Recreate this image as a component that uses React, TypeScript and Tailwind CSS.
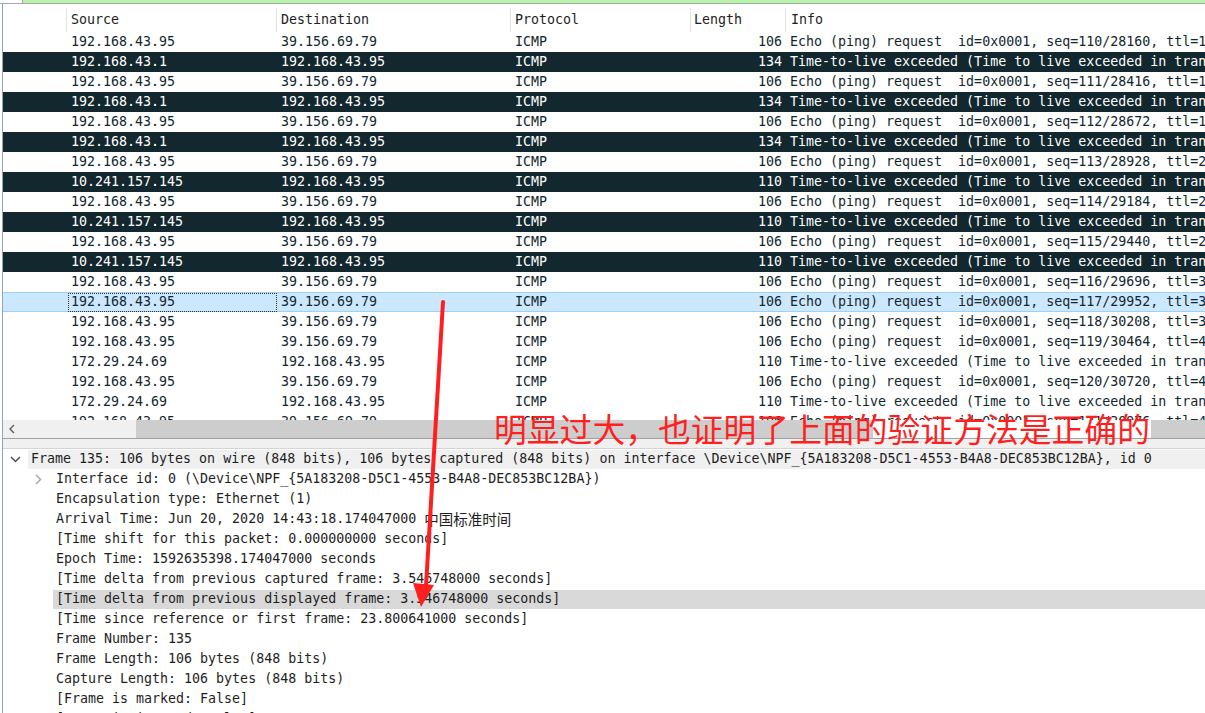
import React from "react";

type Row = { src: string; dst: string; len: string; info: string; dark?: boolean; sel?: boolean };

const ECHO = (seq: number, b: number, ttl: number) =>
  `Echo (ping) request  id=0x0001, seq=${seq}/${b}, ttl=${ttl} (no response found!)`;
const TTL = "Time-to-live exceeded (Time to live exceeded in transit)";
const ME = "192.168.43.95";
const DST = "39.156.69.79";

const rows: Row[] = [
  { src: ME, dst: DST, len: "106", info: ECHO(110, 28160, 1) },
  { src: "192.168.43.1", dst: ME, len: "134", info: TTL, dark: true },
  { src: ME, dst: DST, len: "106", info: ECHO(111, 28416, 1) },
  { src: "192.168.43.1", dst: ME, len: "134", info: TTL, dark: true },
  { src: ME, dst: DST, len: "106", info: ECHO(112, 28672, 1) },
  { src: "192.168.43.1", dst: ME, len: "134", info: TTL, dark: true },
  { src: ME, dst: DST, len: "106", info: ECHO(113, 28928, 2) },
  { src: "10.241.157.145", dst: ME, len: "110", info: TTL, dark: true },
  { src: ME, dst: DST, len: "106", info: ECHO(114, 29184, 2) },
  { src: "10.241.157.145", dst: ME, len: "110", info: TTL, dark: true },
  { src: ME, dst: DST, len: "106", info: ECHO(115, 29440, 2) },
  { src: "10.241.157.145", dst: ME, len: "110", info: TTL, dark: true },
  { src: ME, dst: DST, len: "106", info: ECHO(116, 29696, 3) },
  { src: ME, dst: DST, len: "106", info: ECHO(117, 29952, 3), sel: true },
  { src: ME, dst: DST, len: "106", info: ECHO(118, 30208, 3) },
  { src: ME, dst: DST, len: "106", info: ECHO(119, 30464, 4) },
  { src: "172.29.24.69", dst: ME, len: "110", info: TTL },
  { src: ME, dst: DST, len: "106", info: ECHO(120, 30720, 4) },
  { src: "172.29.24.69", dst: ME, len: "110", info: TTL },
  { src: ME, dst: DST, len: "106", info: ECHO(121, 30976, 4) },
];

const details: string[] = [
  "Encapsulation type: Ethernet (1)",
  "Arrival Time: Jun 20, 2020 14:43:18.174047000 中国标准时间",
  "[Time shift for this packet: 0.000000000 seconds]",
  "Epoch Time: 1592635398.174047000 seconds",
  "[Time delta from previous captured frame: 3.546748000 seconds]",
  "[Time delta from previous displayed frame: 3.546748000 seconds]",
  "[Time since reference or first frame: 23.800641000 seconds]",
  "Frame Number: 135",
  "Frame Length: 106 bytes (848 bits)",
  "Capture Length: 106 bytes (848 bits)",
  "[Frame is marked: False]",
  "[Frame is ignored: False]",
];

function PacketRow({ r }: { r: Row }) {
  const base = r.dark
    ? "bg-[#12272e] text-white"
    : r.sel
    ? "bg-[#cce8ff] text-[#12272e] border-y border-[#99d1ff]"
    : "bg-white text-[#12272e]";
  return (
    <div className={`flex h-[20px] shrink-0 items-center box-border whitespace-pre ${base}`}>
      <div className="w-[64px] shrink-0" />
      <div className="w-[210px] shrink-0 h-full flex items-center pl-[4px] box-border">
        {r.sel ? (
          <div className="-ml-[3px] pl-[2px] h-[19px] w-[209px] flex items-center border border-dotted border-[#333]">
            {r.src}
          </div>
        ) : (
          r.src
        )}
      </div>
      <div className="w-[234px] shrink-0 pl-[4px]">{r.dst}</div>
      <div className="w-[180px] shrink-0 pl-[4px]">ICMP</div>
      <div className="w-[95px] shrink-0 text-right pr-[4px]">{r.len}</div>
      <div className="flex-1 pl-[4px] overflow-hidden">{r.info}</div>
    </div>
  );
}

export default function App() {
  const mono = "font-['DejaVu_Sans_Mono','Noto_Sans_CJK_SC',monospace] text-[13.3px]";
  return (
    <div className={`relative w-[1205px] h-[713px] overflow-hidden bg-white ${mono}`}>
      {/* filter bar remnant */}
      <div className="flex h-[4px] border-b border-[#a8a8a8]">
        <div className="w-[23px] border-r border-[#a8a8a8] bg-white" />
        <div className="flex-1 bg-[#b7f5a8]" />
      </div>

      <div className="ml-[2px] border-l border-[#8fa5b0] flex flex-col h-[709px]">
        {/* header */}
        <div className="pt-[4px] bg-white">
          <div className="flex h-[24px] items-center text-[#1e1e1e] whitespace-pre">
            <div className="w-[64px] h-full border-r border-[#e3e3e3] shrink-0" />
            <div className="w-[210px] h-full border-r border-[#e3e3e3] shrink-0 pl-[4px] flex items-center">Source</div>
            <div className="w-[234px] h-full border-r border-[#e3e3e3] shrink-0 pl-[4px] flex items-center">Destination</div>
            <div className="w-[180px] h-full border-r border-[#e3e3e3] shrink-0 pl-[4px] flex items-center">Protocol</div>
            <div className="w-[95px] h-full border-r border-[#e3e3e3] shrink-0 pl-[3px] flex items-center">Length</div>
            <div className="flex-1 pl-[5px] flex items-center">Info</div>
          </div>
        </div>

        {/* packet list */}
        <div className="h-[388px] shrink-0 overflow-hidden flex flex-col">
          {rows.map((r, i) => (
            <PacketRow key={i} r={r} />
          ))}
        </div>

        {/* horizontal scrollbar */}
        <div className="flex h-[18px] shrink-0 bg-[#f0f0f0]">
          <div className="w-[17px] flex items-center justify-center">
            <svg width="8" height="10" viewBox="0 0 8 10">
              <path d="M6 1 L2 5 L6 9" fill="none" stroke="#606060" strokeWidth="1.4" />
            </svg>
          </div>
          <div className="w-[116px]" />
          <div className="flex-1 bg-[#cdcdcd]" />
        </div>

        {/* splitter */}
        <div className="h-[11px] shrink-0 border-t border-[#a0a0a0] border-b border-b-[#d4d4d4] bg-[#f0f0f0] box-border" />

        {/* detail pane */}
        <div className="flex-1 overflow-hidden text-[#1e1e1e] whitespace-pre">
          <div className="flex h-[20px] items-center">
            <div className="w-[25px] flex items-center justify-center">
              <svg width="11" height="7" viewBox="0 0 11 7">
                <path d="M1 1 L5.5 5.5 L10 1" fill="none" stroke="#505050" strokeWidth="1.5" />
              </svg>
            </div>
            <div className="flex-1 h-[19px] bg-[#f0f0f0] pl-[3px] flex items-center">
              Frame 135: 106 bytes on wire (848 bits), 106 bytes captured (848 bits) on interface \Device\NPF_{"{"}5A183208-D5C1-4553-B4A8-DEC853BC12BA{"}"}, id 0
            </div>
          </div>
          <div className="flex h-[20px] items-center">
            <div className="w-[32px]" />
            <div className="w-[21px] flex items-center">
              <svg width="7" height="11" viewBox="0 0 7 11">
                <path d="M1 1 L5.5 5.5 L1 10" fill="none" stroke="#a8a8a8" strokeWidth="1.5" />
              </svg>
            </div>
            <div>Interface id: 0 (\Device\NPF_{"{"}5A183208-D5C1-4553-B4A8-DEC853BC12BA{"}"})</div>
          </div>
          {details.map((d, i) => (
            <div key={i} className="flex h-[20px] items-center">
              <div className="w-[50px] shrink-0" />
              <div
                className={`flex-1 h-[19px] pl-[3px] flex items-center ${
                  d.startsWith("[Time delta from previous displayed") ? "bg-[#d9d9d9]" : ""
                }`}
              >
                {d.includes("中国") ? (
                  <>
                    {d.replace("中国标准时间", "")}
                    <span className="text-[14.5px] font-['Noto_Sans_CJK_SC',sans-serif]">中国标准时间</span>
                  </>
                ) : (
                  d
                )}
              </div>
            </div>
          ))}
        </div>
      </div>

      {/* annotation overlay */}
      <div className="absolute left-[873px] top-[420px] w-[278px] h-[18px] bg-white" />
      <div className="absolute left-[494px] top-[410px] text-[32.8px] leading-[36px] text-[#ff1f1f] font-['Noto_Sans_CJK_SC',sans-serif] whitespace-nowrap">
        明显过大，也证明了上面的验证方法是正确的
      </div>
      <svg className="absolute left-0 top-0 pointer-events-none" width="1205" height="713" viewBox="0 0 1205 713">
        <path d="M443 302 L426 586" stroke="#ff1f1f" strokeWidth="4" strokeLinecap="round" fill="none" />
        <polygon points="413,583 434,585 421,607" fill="#ff1f1f" />
      </svg>
    </div>
  );
}
